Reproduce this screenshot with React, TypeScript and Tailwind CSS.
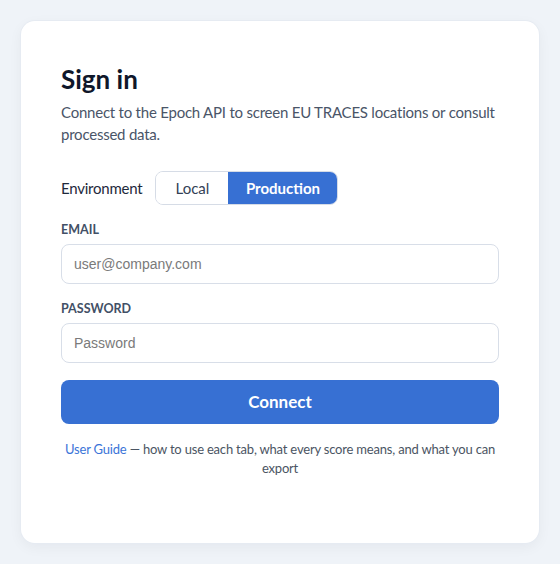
import { useState } from "react";

export default function App() {
  const [env, setEnv] = useState<"local" | "production">("production");

  return (
    <div className="h-[564px] bg-[#eff3f8] p-[21px] font-['Lato','Noto_Sans',sans-serif]">
      <div className="h-full rounded-[14px] bg-white px-[40px] pt-[42px] shadow-[0_4px_14px_rgba(15,23,42,0.05)] ring-1 ring-[#e6ebf2]">
        {/* Header */}
        <h1 className="text-[26px] font-bold leading-[32px] text-[#0f172a]">Sign in</h1>
        <p className="mt-[6px] text-[15px] leading-[22px] tracking-[-0.015em] text-[#4a5568]">
          Connect to the Epoch API to screen EU TRACES locations or consult processed data.
        </p>

        {/* Environment toggle */}
        <div className="mt-[26px] flex items-center gap-[13px]">
          <span className="text-[15px] tracking-[-0.015em] text-[#1e293b]">Environment</span>
          <div className="flex h-[34px] overflow-hidden rounded-[8px] border border-[#d6dce6]">
            <button
              onClick={() => setEnv("local")}
              className={`w-[72px] text-[15px] ${
                env === "local" ? "bg-[#3770d3] font-bold text-white" : "bg-white text-[#334155]"
              }`}
            >
              Local
            </button>
            <button
              onClick={() => setEnv("production")}
              className={`w-[109px] text-[15px] ${
                env === "production" ? "bg-[#3770d3] font-bold text-white" : "bg-white text-[#334155]"
              }`}
            >
              Production
            </button>
          </div>
        </div>

        {/* Fields */}
        <label className="mt-4 block text-[12.5px] font-bold leading-[18px] text-[#425066]">
          EMAIL
        </label>
        <input
          type="email"
          placeholder="user@company.com"
          className="mt-[5px] block h-[40px] w-full rounded-[8px] border border-[#d8dee8] px-[12px] font-['Liberation_Sans',Arial,sans-serif] text-[14px] text-[#1e293b] outline-none placeholder:text-[#7a7a7a]"
        />

        <label className="mt-4 block text-[12.5px] font-bold leading-[18px] text-[#425066]">
          PASSWORD
        </label>
        <input
          type="password"
          placeholder="Password"
          className="mt-[5px] block h-[40px] w-full rounded-[8px] border border-[#d8dee8] px-[12px] font-['Liberation_Sans',Arial,sans-serif] text-[14px] text-[#1e293b] outline-none placeholder:text-[#7a7a7a]"
        />

        <button className="mt-[17px] h-[44px] w-full rounded-[8px] bg-[#3770d3] text-[17px] font-bold text-white">
          Connect
        </button>

        {/* Footer */}
        <p className="mt-4 text-center text-[13px] leading-[19px] tracking-[-0.015em] text-[#4b5563]">
          <a href="#" className="text-[#3b74d8]">User Guide</a> — how to use each tab, what every score means, and what you can
          export
        </p>
      </div>
    </div>
  );
}
